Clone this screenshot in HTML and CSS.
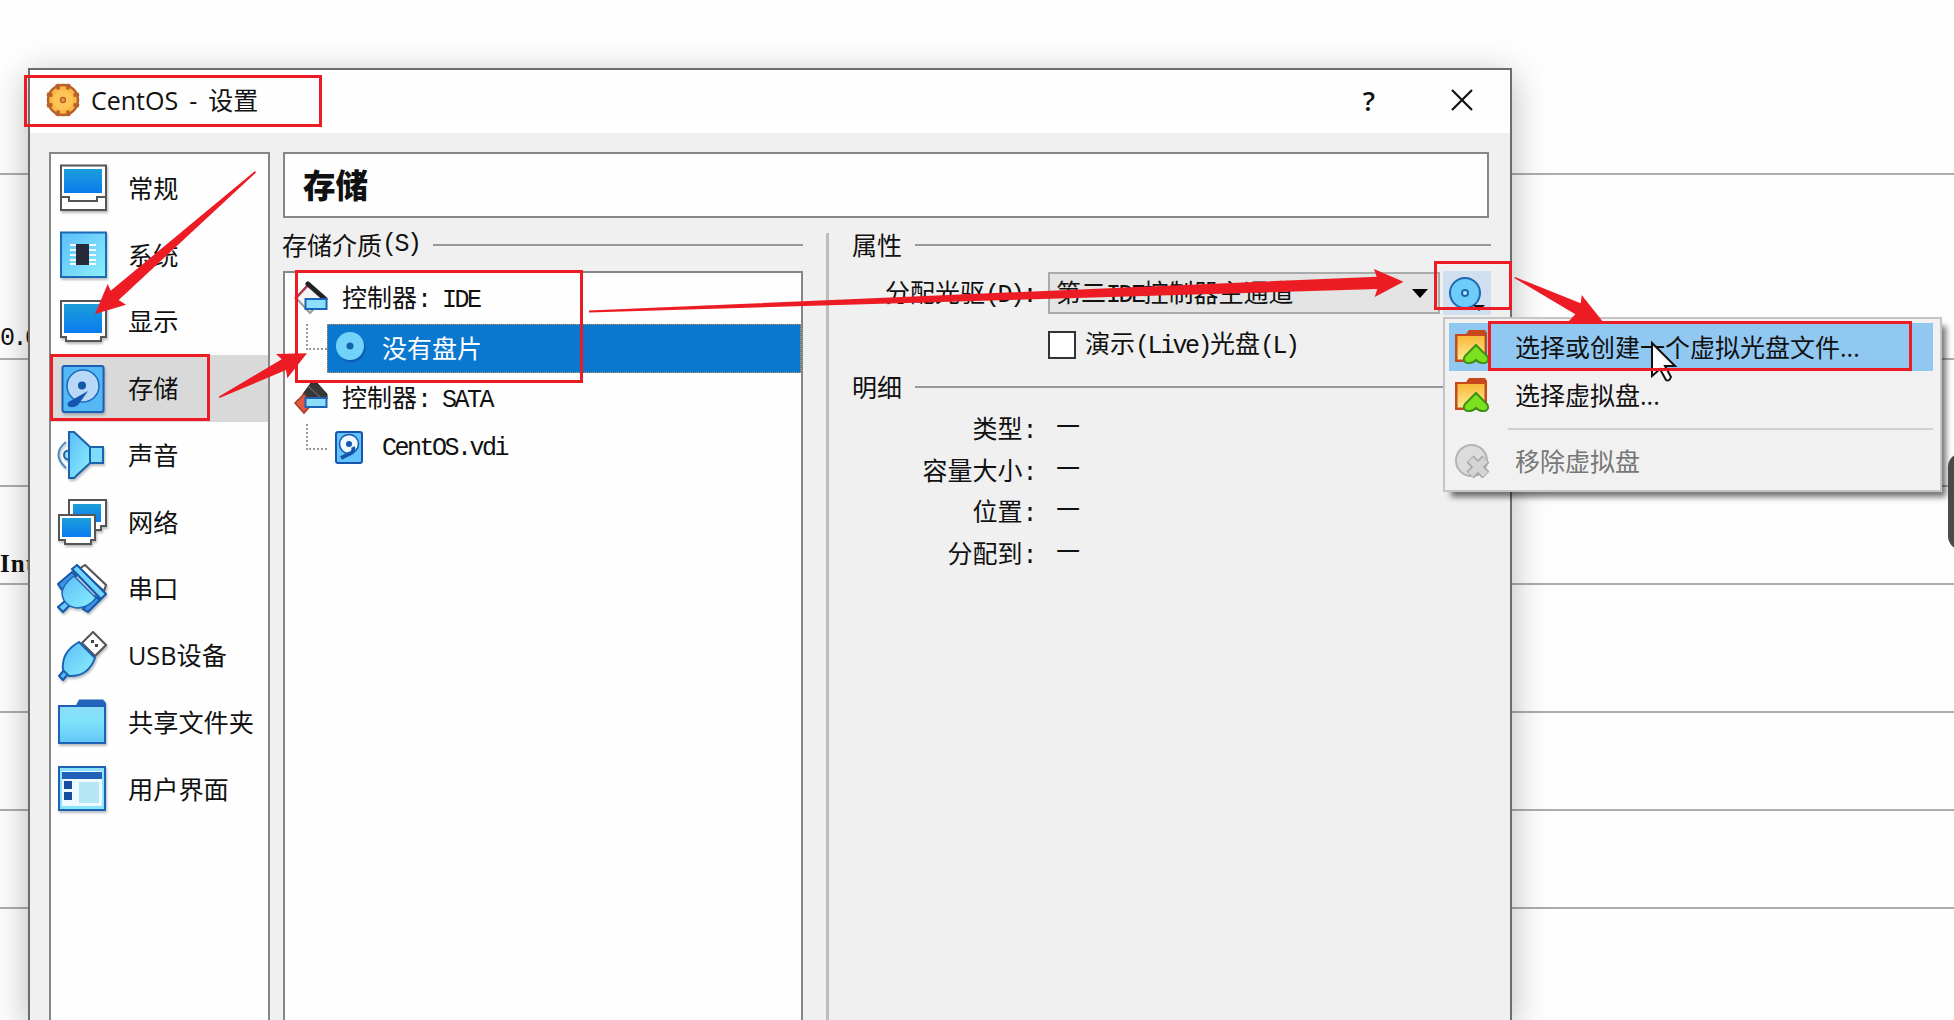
FILE: index.html
```html
<!DOCTYPE html>
<html lang="zh-CN">
<head>
<meta charset="utf-8">
<title>CentOS - 设置</title>
<link rel="stylesheet" href="styles.css">
</head>
<body>
<svg class="defs" aria-hidden="true">
  <defs>
    <linearGradient id="screen" x1="0" y1="0" x2="0" y2="1"><stop offset="0" stop-color="#1b9fd8"/><stop offset="1" stop-color="#0a7bf0"/></linearGradient>
    <linearGradient id="sky" x1="0" y1="0" x2="1" y2="1"><stop offset="0" stop-color="#5bbdf8"/><stop offset="1" stop-color="#8cf0fc"/></linearGradient>
    <linearGradient id="folder" x1="0" y1="0" x2="0" y2="1"><stop offset="0" stop-color="#8fdcf8"/><stop offset=".4" stop-color="#7fe3fa"/><stop offset="1" stop-color="#62c6f8"/></linearGradient>
    <linearGradient id="gold" x1="0" y1="0" x2="0" y2="1"><stop offset="0" stop-color="#f9b93c"/><stop offset="1" stop-color="#fdea8e"/></linearGradient>
    <symbol id="pick" viewBox="0 0 34 34">
      <path d="M0 4H11L14 0H30L32 3V32H0Z" fill="#c8481c"/>
      <path d="M2.500 6H29.500V29.500H2.500Z" fill="url(#gold)"/>
      <path d="M21 15L32 26Q35 31 30 33Q25 34 21 30Q17 34 12 33Q7 31 10 26Z" fill="#7be01e" stroke="#3f8f16" stroke-width="2"/>
    </symbol>
  </defs>
</svg>

<div class="backdrop">
  <div class="line r1"></div>
  <div class="line r2">0.0.0</div>
  <div class="line r3"></div>
  <div class="line r4"><b>Int</b></div>
  <div class="line r5"></div>
  <div class="line r6"></div>
  <div class="line r7"></div>
</div>

<section class="window">
  <header class="titlebar">
    <svg class="gear" viewBox="0 0 34 34"><circle cx="17" cy="17" r="15" fill="#fbb944" stroke="#b8602a" stroke-width="2.500"/><g stroke="#b8602a" stroke-width="3.500"><path d="M11 1L12.500 6.500M23 1L21.500 6.500M11 33L12.500 27.500M23 33L21.500 27.500M1 11L6.500 12.500M1 23L6.500 21.500M33 11L27.500 12.500M33 23L27.500 21.500"/></g><circle cx="17" cy="17" r="10" fill="#fdc458"/><circle cx="17" cy="17" r="2.400" fill="#e8a03c" stroke="#b8602a" stroke-width="1.500"/></svg>
    <h1>CentOS<i>-</i>设置</h1>
    <span class="help">?</span>
    <svg class="close" viewBox="0 0 22 22"><path d="M1 1L21 21M21 1L1 21" stroke="#111" stroke-width="2.200"/></svg>
  </header>

  <div class="body">
    <nav class="sidebar">
      <div class="item"><svg viewBox="0 0 50 50"><path d="M4 2.500H49V47H4Z" fill="#fff" stroke="#555" stroke-width="2"/><path d="M7 6H45V30H7Z" fill="url(#screen)"/><path d="M4 34H12V38H40V34H49" fill="none" stroke="#555" stroke-width="2"/></svg>常规</div>
      <div class="item"><svg viewBox="0 0 50 50"><path d="M4 2.500H49V47H4Z" fill="url(#sky)" stroke="#1c6ab4" stroke-width="2"/><path d="M13 15H39M13 20H39M13 25H39M13 30H39M13 34H39" stroke="#f4fbff" stroke-width="1.800"/><path d="M19 14H32V35H19Z" fill="#282a3a"/></svg>系统</div>
      <div class="item"><svg viewBox="0 0 50 50"><path d="M4 4H49V40H44V44H9V40H4Z" fill="#fff" stroke="#555" stroke-width="2"/><path d="M7 7H45V36H7Z" fill="url(#screen)"/></svg>显示</div>
      <div class="item selected"><svg viewBox="0 0 50 50"><rect x="5.500" y="2" width="41" height="46" rx="2" fill="#54b8f6" stroke="#1c5fb4" stroke-width="2"/><circle cx="26" cy="22" r="16" fill="#b8d8f8" stroke="#1d66bc" stroke-width="1.500"/><circle cx="25" cy="21.500" r="4" fill="#1457a8"/><path d="M31 27L21 41Q15 45 11 42Q9 38 15 36Z" fill="#1555ae"/></svg>存储</div>
      <div class="item"><svg viewBox="0 0 50 50"><path d="M9 12Q-6 24 9 38" fill="none" stroke="#4d88c4" stroke-width="2"/><circle cx="11.500" cy="25" r="4.500" fill="#8fe0fa" stroke="#1d62ac" stroke-width="2"/><path d="M12 2H17L33 17V33L17 48H12Z" fill="url(#sky)" stroke="#1d62ac" stroke-width="2"/><path d="M33 17H46V33H33Z" fill="#7fdcfa" stroke="#1d62ac" stroke-width="2"/></svg>声音</div>
      <div class="item"><svg viewBox="0 0 50 50"><path d="M12 3H49V29H44V33H12Z" fill="#fff" stroke="#555" stroke-width="2"/><path d="M16 7H44V25H16Z" fill="url(#screen)"/><path d="M2 18H38V43H34V47H8V43H2Z" fill="#fff" stroke="#555" stroke-width="2"/><path d="M5 21H34V40H5Z" fill="url(#screen)"/></svg>网络</div>
      <div class="item"><svg viewBox="0 0 50 50"><path d="M22 5L28 1L49 21L47 27Z" fill="#fff" stroke="#555" stroke-width="2"/><path d="M1 20L15 8L19 12L9 22L5 26Z" fill="#3f93e0" stroke="#1557ac" stroke-width="2"/><path d="M26 45L38 32L43 36L31 48Z" fill="#3f93e0" stroke="#1557ac" stroke-width="2"/><path d="M1 43L8 37L13 41L6 48Z" fill="#68c8f8" stroke="#1557ac" stroke-width="2"/><path d="M17 12L39 34Q31 44 20 44Q6 42 5 29Q6 20 17 12Z" fill="url(#sky)" stroke="#1d66b8" stroke-width="1.500"/><path d="M15 5L20 1L49 30L44 35Z" fill="#72d4fa" stroke="#1557ac" stroke-width="2"/></svg>串口</div>
      <div class="item"><svg viewBox="0 0 50 50"><path d="M25 12L36 1L49 14L38 25Z" fill="#fff" stroke="#555" stroke-width="2"/><path d="M34 9h3v3h-3zM38 13h3v3h-3z" fill="#444"/><path d="M2 45L8 38L12 42L6 49Z" fill="#55b8f4" stroke="#1557ac" stroke-width="2"/><path d="M22 11L38 27Q31 46 12 45L6 39Q4 21 22 11Z" fill="url(#sky)" stroke="#1d62b4" stroke-width="2"/></svg>USB设备</div>
      <div class="item"><svg viewBox="0 0 50 50"><path d="M18 10L22 2.500H46L49 6V20H18Z" fill="#2464bc"/><path d="M2 9H48V46H2Z" fill="url(#folder)" stroke="#1d62b4" stroke-width="2"/></svg>共享文件夹</div>
      <div class="item"><svg viewBox="0 0 50 50"><path d="M2 3H48V46H2Z" fill="#8ce4fa" stroke="#1d62b4" stroke-width="2"/><path d="M5 7H45V42H5Z" fill="#eefaff"/><path d="M5 8H45V15H5Z" fill="#2161b8"/><path d="M7 17h8v8h-8zM7 28h8v8h-8z" fill="#164f9f"/><path d="M22 18H42V39H22Z" fill="#b4e6f4"/></svg>用户界面</div>
    </nav>

    <main class="main">
      <h2 class="page-title">存储</h2>
      <div class="columns">
        <section class="media">
          <h3 class="group">存储介质<span class="m">(S)</span></h3>
          <div class="tree">
            <div class="node root"><svg viewBox="0 0 34 34"><path d="M2 17L15 3L30 17L16 32Z" fill="#f4f4f4" stroke="#999" stroke-width="2"/><path d="M1 18L15 3" stroke="#b53a48" stroke-width="2.500"/><path d="M14 3L31 18" stroke="#222" stroke-width="5" stroke-linecap="round"/><path d="M11.500 18H32.500V28H11.500Z" fill="#8cdffa" stroke="#1d62b4" stroke-width="2"/></svg><span>控制器<span class="m">: IDE</span></span></div>
            <div class="node child"><i class="branch"></i><div class="leaf active"><svg viewBox="0 0 32 34"><circle cx="16.500" cy="18" r="14" fill="#0a5cae"/><circle cx="15" cy="16" r="14" fill="#72d3fa"/><circle cx="15" cy="16" r="3.500" fill="#1462aa"/></svg>没有盘片</div></div>
            <div class="node root"><svg viewBox="0 0 34 34"><path d="M9 13L17 2Q20 0 23 2L33 13V18H9Z" fill="#383838" stroke="#222"/><path d="M14 5L27 17" stroke="#666" stroke-width="1.200"/><path d="M1 22L10 13L18 23L10 32Z" fill="#e05a40" stroke="#a83a28" stroke-width="1.500"/><path d="M11.500 17H32.500V26H11.500Z" fill="#8cdffa" stroke="#1d62b4" stroke-width="2"/></svg><span>控制器<span class="m">: SATA</span></span></div>
            <div class="node child"><i class="branch"></i><div class="leaf"><svg viewBox="0 0 32 34"><rect x="1" y="2" width="26" height="31" rx="2" fill="#62c4fa" stroke="#1557ac" stroke-width="2"/><circle cx="14" cy="14" r="9.500" fill="#eefaff" stroke="#1557ac" stroke-width="1.500"/><circle cx="14" cy="14" r="3" fill="#1557ac"/><path d="M18 17Q20 22 14 24L6 28" stroke="#1557ac" stroke-width="4" fill="none"/></svg><span class="m">CentOS.vdi</span></div></div>
          </div>
        </section>
        <div class="splitter"></div>
        <section class="props">
          <h3 class="group">属性</h3>
          <div class="field">
            <label>分配光驱<span class="m">(D):</span></label>
            <div class="combo"><span>第二<span class="m">IDE</span>控制器主通道</span><svg viewBox="0 0 16 9"><path d="M0 0H16L8 9Z"/></svg></div>
            <div class="disc-button"><svg viewBox="0 0 48 44"><circle cx="22" cy="22" r="15" fill="#6fccf9" stroke="#1d66b4" stroke-width="2"/><circle cx="22" cy="22" r="3" fill="#b8ecff" stroke="#1d66b4" stroke-width="2"/><path d="M30 34H42L36 40Z" fill="#111"/></svg></div>
          </div>
          <div class="check"><i></i><span>演示<span class="m">(Live)</span>光盘<span class="m">(L)</span></span></div>
          <h3 class="group detail">明细</h3>
          <dl>
            <dt>类型<span class="m">:</span></dt><dd>—</dd>
            <dt>容量大小<span class="m">:</span></dt><dd>—</dd>
            <dt>位置<span class="m">:</span></dt><dd>—</dd>
            <dt>分配到<span class="m">:</span></dt><dd>—</dd>
          </dl>
        </section>
      </div>
    </main>
  </div>
</section>

<div class="menu">
  <div class="entry hot"><svg viewBox="0 0 34 34"><use href="#pick"/></svg>选择或创建一个虚拟光盘文件...</div>
  <div class="entry"><svg viewBox="0 0 34 34"><use href="#pick"/></svg>选择虚拟盘...</div>
  <div class="rule"></div>
  <div class="entry off"><svg viewBox="0 0 34 34"><circle cx="16.500" cy="16.500" r="15.500" fill="#dcdcdc" stroke="#b4b4b4" stroke-width="2"/><path d="M15 15L31 31M31 15L15 31" stroke="#a4a4a4" stroke-width="10"/><path d="M15.500 15.500L30.500 30.500M30.500 15.500L15.500 30.500" stroke="#d4d4d4" stroke-width="7"/></svg>移除虚拟盘</div>
</div>

<div class="edge-tab"></div>

<svg class="marks" viewBox="0 0 1954 1020">
  <path class="cursor" d="M1652 343V376L1660 369L1666 380Q1669 382 1671 377L1665 366H1675Z"/>
  <g class="frames">
    <rect x="25.500" y="76.500" width="295" height="49"/>
    <rect x="51.500" y="355.500" width="157" height="64"/>
    <rect x="296.500" y="271.500" width="285" height="110"/>
    <rect x="1435.500" y="262.500" width="75" height="46"/>
    <rect x="1489.500" y="322.500" width="421" height="47"/>
  </g>
  <g class="arrows">
    <path d="M255 171L110.700 290.700L107.700 284L95 314L126 304.700L118.700 300L256 172.500Z"/>
    <path d="M219 396.500L281.700 359.300L276 354L307 353.300L287.300 378.300L286 370L219.500 398Z"/>
    <path d="M589 310.500L1376.700 276.700L1374 269L1403.500 281.700L1374.700 297L1377.300 289L589 312.500Z"/>
    <path d="M1515 277L1580.700 303.300L1581.700 295L1602.300 321H1569L1575.300 314.300L1514.300 278Z"/>
  </g>
</svg>
</body>
</html>
```
FILE: styles.css
```css
* { box-sizing: border-box; }
body {
  margin: 0;
  width: 1954px;
  height: 1020px;
  overflow: hidden;
  position: relative;
  background: #fdfefd;
  color: #111;
  font: 25px/1 "Open Sans", "Noto Sans CJK SC", sans-serif;
}
h1, h2, h3, dl, dd { margin: 0; font-weight: 400; font-size: inherit; }
i { font-style: normal; }
svg { display: block; flex: none; }
.defs { position: absolute; width: 0; height: 0; }

/* half-width latin glyphs: 12.5px advance */
.m { font-family: "Liberation Mono", monospace; font-size: 25px; letter-spacing: -2.5px; white-space: pre; }

.backdrop { height: 1020px; display: flex; flex-direction: column; }
.line { flex: none; border-bottom: 2px solid #adadad; font: 25px/1 "Liberation Mono", monospace; letter-spacing: -2.5px; display: flex; align-items: flex-end; }
.r1 { height: 175px; }
.r2 { height: 185px; padding-bottom: 7px; }
.r3 { height: 127px; }
.r4 { height: 98px; padding-bottom: 7px; }
.r4 b { font-family: "Liberation Serif", serif; letter-spacing: 1px; }
.r5 { height: 128px; }
.r6 { height: 98px; }
.r7 { height: 98px; }

.window {
  position: absolute;
  left: 28px;
  top: 68px;
  width: 1484px;
  height: 952px;
  display: flex;
  flex-direction: column;
  background: #eff0ef;
  border: 2px solid #6c6e6d;
  border-bottom: 0;
  box-shadow: 0 8px 34px rgba(0, 0, 0, .28);
}
.titlebar { height: 63px; flex: none; display: flex; align-items: center; padding: 0 37px 3px 16px; background: #fdfefd; }
.gear { width: 34px; height: 34px; margin: 0 11px 0 0; }
.titlebar h1 { flex: 1; }
.titlebar h1 i { margin: 0 11px; }
.help { font: 600 27px/1 "Open Sans", sans-serif; margin-right: 76px; }
.close { width: 22px; height: 22px; }

.body { flex: 1; display: flex; gap: 13px; padding: 19px 19px 0; }
.sidebar { width: 221px; padding-top: 1px; border: 2px solid #858786; border-bottom: 0; background: #fdfefd; font-size: 25.2px; }
.item { height: 66.75px; display: flex; align-items: center; gap: 21px; padding-left: 6px; white-space: nowrap; }
.item svg { width: 50px; height: 50px; filter: drop-shadow(1px 2px 1px rgba(60, 70, 80, .35)); }
.selected { background: #d9d9d9; }

.main { flex: 1; display: flex; flex-direction: column; font-family: "Noto Sans CJK SC", sans-serif; }
.page-title { height: 66px; width: 1206px; border: 2px solid #858786; background: #fdfefd; padding-left: 18px; font-size: 32.5px; line-height: 60px; font-weight: 800; }
.columns { flex: 1; display: flex; }
.group { height: 53px; display: flex; align-items: center; gap: 13px; line-height: 25px; }
.media .group { margin-left: -1px; }
.group .m { margin-left: -13px; }
.group::after { content: ""; flex: 1; height: 2px; background: #979998; }
.media { width: 520px; display: flex; flex-direction: column; }
.tree { flex: 1; border: 2px solid #858786; border-bottom: 0; background: #fdfefd; }
.node { height: 50px; display: flex; align-items: center; }
.root { padding-left: 9px; gap: 14px; }
.root svg { width: 34px; height: 34px; }
.branch { width: 21px; height: 26px; align-self: flex-start; margin: 1px 0 0 21px; border: dotted #999; border-width: 0 0 2px 2px; }
.leaf { flex: 1; height: 49px; display: flex; align-items: center; gap: 15px; padding: 0 0 2px 8px; }
.leaf svg { width: 32px; height: 34px; }
.leaf > .m { padding-top: 3px; }
.active { background: #0b78d0; color: #fff; border: 1px dotted #d09858; padding-left: 7px; }
.splitter { width: 3px; margin: 15px 23px 0; background: #bcbdbc; }
.props { flex: 1; }
.field { height: 44px; display: flex; align-items: center; }
.field label { width: 183px; text-align: right; white-space: nowrap; }
.combo { width: 392px; height: 42px; margin-left: 13px; border: 2px solid #a9abaa; background: #e3e4e3; display: flex; align-items: center; justify-content: space-between; padding: 0 10px 0 6px; }
.combo svg { width: 16px; height: 9px; }
.disc-button { width: 48px; height: 44px; margin-left: 3px; background: #d0dff0; }
.check { height: 51px; display: flex; align-items: center; gap: 9px; padding: 8px 0 0 196px; }
.check i { width: 28px; height: 28px; border: 2px solid #333; background: #fff; }
.detail { height: 41px; }
dl { display: grid; grid-template-columns: 183px 1fr; column-gap: 21px; grid-auto-rows: 41.7px; line-height: 40px; }
dt { text-align: right; }
dd { line-height: 31px; font-size: 27px; font-weight: 500; }

.menu {
  position: absolute;
  left: 1443px;
  top: 317px;
  width: 499px;
  height: 175px;
  padding: 4px 7px 0 4px;
  border: 2px solid #c4c5c4;
  background: #f1f1f1;
  box-shadow: 6px 7px 6px -2px rgba(0, 0, 0, .55);
}
.entry { height: 48px; display: flex; align-items: center; gap: 26px; padding-left: 6px; white-space: nowrap; }
.entry svg { width: 34px; height: 34px; }
.hot { background: #91c8f2; }
.rule { height: 2px; margin: 9px 0 7px 59px; background: #cfd0cf; }
.off { color: #777; }

.edge-tab { position: absolute; left: 1948px; top: 453px; width: 40px; height: 97px; border-radius: 14px; background: #4a4a4a; }

/* callouts drawn over the whole screen */
.marks { position: absolute; left: 0; top: 0; width: 1954px; height: 1020px; }
.frames { fill: none; stroke: #ed1c24; stroke-width: 3; }
.arrows { fill: #ed1c24; }
.cursor { fill: #fff; stroke: #111; stroke-width: 2; }
```
